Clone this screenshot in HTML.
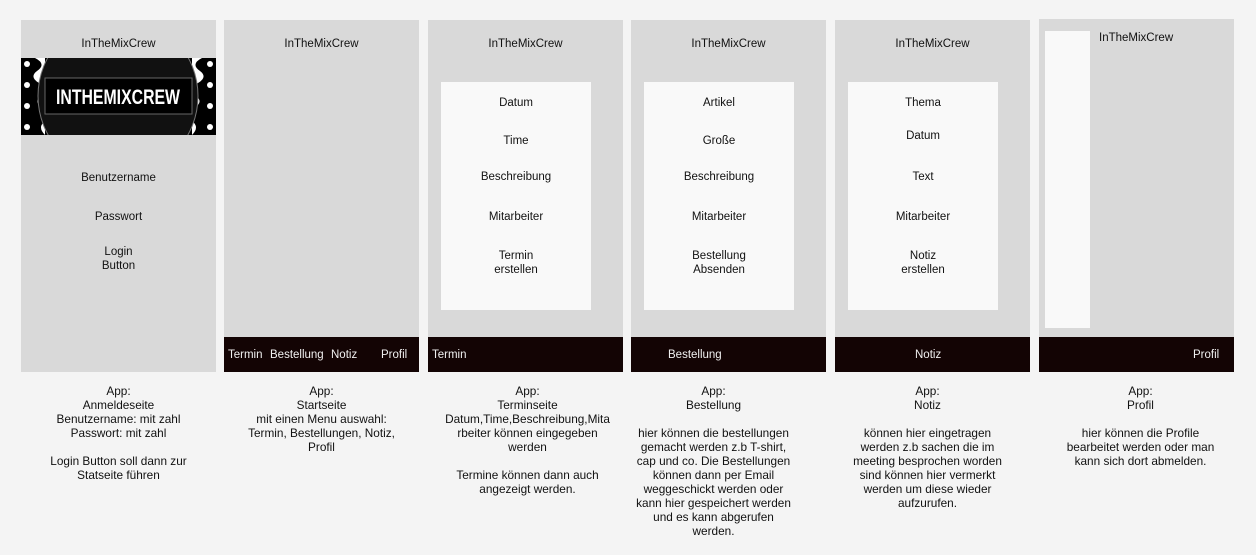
<!DOCTYPE html>
<html><head><style>
body{margin:0;width:1256px;height:555px;background:#f4f4f4;font-family:"Liberation Sans",sans-serif;font-size:11.5px;color:#111;position:relative;overflow:hidden}
.f{position:absolute;top:20px;width:195px;height:352px;background:#d9d9d9}
.t{position:absolute;width:100%;text-align:center;top:18px;font-size:11.5px}
.bar{position:absolute;left:0;right:0;bottom:0;height:35px;background:#130404;color:#f0f0f0;font-size:11.5px}
.bar span{position:absolute;top:12px}
.p{position:absolute;top:62px;width:150px;height:228px;left:13px;background:#f9f9f9}
.c{position:absolute;width:100%;text-align:center;line-height:14px}
.d{position:absolute;top:384px;width:195px;text-align:center;line-height:14px;font-size:11.8px}
</style></head><body>

<div class="f" style="left:21px">
<div class="t">InTheMixCrew</div>
<div style="position:absolute;top:38px;left:0;width:195px;height:77px;background:#fff;overflow:hidden">
<svg width="195" height="77" viewBox="0 0 195 77">
<rect x="0" y="0" width="195" height="77" fill="#000"/>
<g fill="#fff">
<path d="M14 0 q12 6 2 13 q-8 6 2 12 q12 7 2 13 q-8 6 2 12 q12 7 2 13 q-8 6 0 14 L24 77 L24 0Z"/>
<path d="M181 0 q-12 6 -2 13 q8 6 -2 12 q-12 7 -2 13 q8 6 -2 12 q-12 7 -2 13 q8 6 0 14 L171 77 L171 0Z"/></g>
<g fill="#fff"><circle cx="6" cy="6" r="3"/><circle cx="6" cy="27" r="3"/><circle cx="6" cy="48" r="3"/><circle cx="6" cy="69" r="3"/><circle cx="189" cy="6" r="3"/><circle cx="189" cy="27" r="3"/><circle cx="189" cy="48" r="3"/><circle cx="189" cy="69" r="3"/></g>
<circle cx="97" cy="38" r="80" fill="#111" stroke="#777" stroke-width="1"/>
<rect x="24" y="20" width="147" height="36" fill="#000" stroke="#666"/>
<text x="97" y="46" text-anchor="middle" fill="#fff" font-family="Liberation Sans" font-weight="bold" font-size="21" textLength="124" lengthAdjust="spacingAndGlyphs">INTHEMIXCREW</text>
</svg></div>
<div class="c" style="top:151px">Benutzername</div>
<div class="c" style="top:190px">Passwort</div>
<div class="c" style="top:225px">Login<br>Button</div>
</div>

<div class="f" style="left:224px">
<div class="t">InTheMixCrew</div>
<div class="bar"><span style="left:4px">Termin</span><span style="left:46px">Bestellung</span><span style="left:107px">Notiz</span><span style="left:157px">Profil</span></div>
</div>

<div class="f" style="left:428px">
<div class="t">InTheMixCrew</div>
<div class="p">
<div class="c" style="top:14px">Datum</div>
<div class="c" style="top:52px">Time</div>
<div class="c" style="top:88px">Beschreibung</div>
<div class="c" style="top:128px">Mitarbeiter</div>
<div class="c" style="top:167px">Termin<br>erstellen</div>
</div>
<div class="bar"><span style="left:4px">Termin</span></div>
</div>

<div class="f" style="left:631px">
<div class="t">InTheMixCrew</div>
<div class="p">
<div class="c" style="top:14px">Artikel</div>
<div class="c" style="top:52px">Große</div>
<div class="c" style="top:88px">Beschreibung</div>
<div class="c" style="top:128px">Mitarbeiter</div>
<div class="c" style="top:167px">Bestellung<br>Absenden</div>
</div>
<div class="bar"><span style="left:37px">Bestellung</span></div>
</div>

<div class="f" style="left:835px">
<div class="t">InTheMixCrew</div>
<div class="p">
<div class="c" style="top:14px">Thema</div>
<div class="c" style="top:47px">Datum</div>
<div class="c" style="top:88px">Text</div>
<div class="c" style="top:128px">Mitarbeiter</div>
<div class="c" style="top:167px">Notiz<br>erstellen</div>
</div>
<div class="bar"><span style="left:80px">Notiz</span></div>
</div>

<div class="f" style="left:1039px;top:19px;height:353px">
<div style="position:absolute;left:6px;top:12px;width:45px;height:297px;background:#f9f9f9"></div>
<div style="position:absolute;left:60px;top:13px">InTheMixCrew</div>
<div class="bar"><span style="left:154px">Profil</span></div>
</div>

<div class="d" style="left:21px">App:<br>Anmeldeseite<br>Benutzername: mit zahl<br>Passwort: mit zahl<br><br>Login Button soll dann zur<br>Statseite führen</div>
<div class="d" style="left:224px">App:<br>Startseite<br>mit einen Menu auswahl:<br>Termin, Bestellungen, Notiz,<br>Profil</div>
<div class="d" style="left:430px">App:<br>Terminseite<br>Datum,Time,Beschreibung,Mita<br>rbeiter können eingegeben<br>werden<br><br>Termine können dann auch<br>angezeigt werden.</div>
<div class="d" style="left:616px">App:<br>Bestellung<br><br>hier können die bestellungen<br>gemacht werden z.b T-shirt,<br>cap und co. Die Bestellungen<br>können dann per Email<br>weggeschickt werden oder<br>kann hier gespeichert werden<br>und es kann abgerufen<br>werden.</div>
<div class="d" style="left:830px">App:<br>Notiz<br><br>können hier eingetragen<br>werden z.b sachen die im<br>meeting besprochen worden<br>sind können hier vermerkt<br>werden um diese wieder<br>aufzurufen.</div>
<div class="d" style="left:1043px">App:<br>Profil<br><br>hier können die Profile<br>bearbeitet werden oder man<br>kann sich dort abmelden.</div>
</body></html>
